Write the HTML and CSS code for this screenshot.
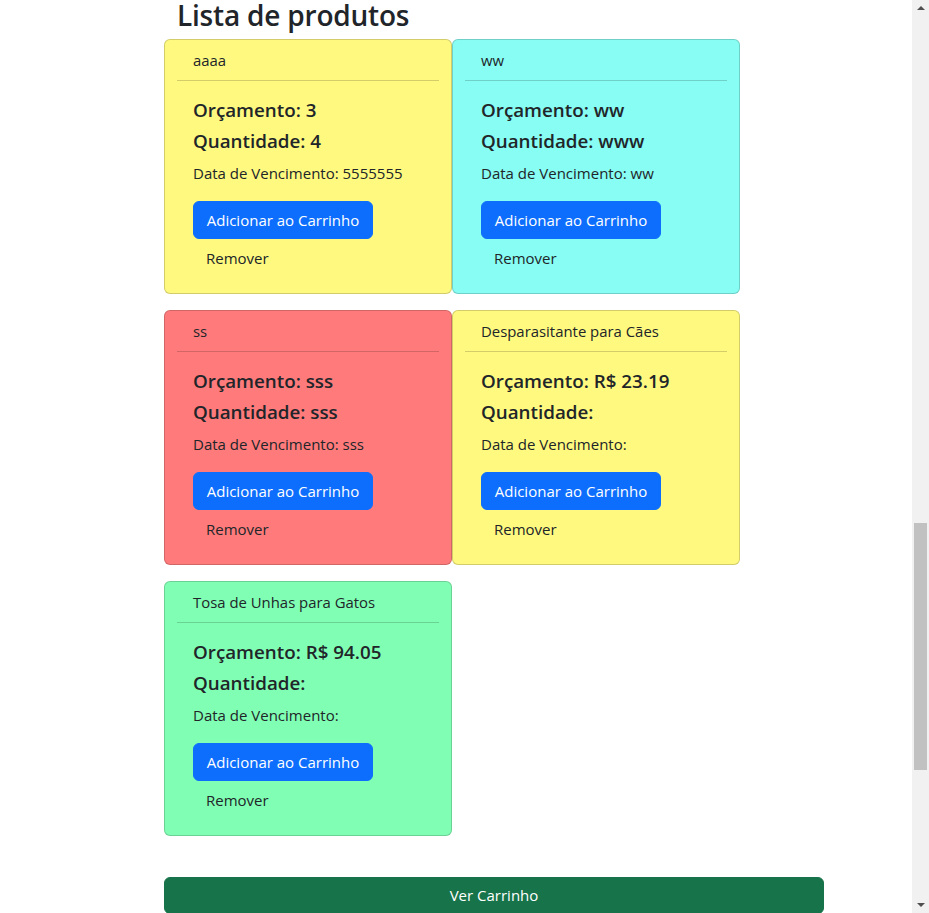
FILE: index.html
```html
<!DOCTYPE html>
<html lang="pt-BR">
<head>
<meta charset="utf-8">
<title>Lista de produtos</title>
<link rel="stylesheet" href="styles.css">
</head>
<body>
<div class="page">
  <main class="main">
    <h3 class="title">Lista de produtos</h3>
    <div class="grid">
      <div class="card yellow">
        <div class="card-header">aaaa</div>
        <div class="card-body">
          <h5 class="card-title">Orçamento: 3</h5>
          <h5 class="card-title">Quantidade: 4</h5>
          <p class="card-text">Data de Vencimento: 5555555</p>
          <button class="btn btn-primary">Adicionar ao Carrinho</button>
          <button class="btn btn-plain">Remover</button>
        </div>
      </div>
      <div class="card cyan">
        <div class="card-header">ww</div>
        <div class="card-body">
          <h5 class="card-title">Orçamento: ww</h5>
          <h5 class="card-title">Quantidade: www</h5>
          <p class="card-text">Data de Vencimento: ww</p>
          <button class="btn btn-primary">Adicionar ao Carrinho</button>
          <button class="btn btn-plain">Remover</button>
        </div>
      </div>
      <div class="card red">
        <div class="card-header">ss</div>
        <div class="card-body">
          <h5 class="card-title">Orçamento: sss</h5>
          <h5 class="card-title">Quantidade: sss</h5>
          <p class="card-text">Data de Vencimento: sss</p>
          <button class="btn btn-primary">Adicionar ao Carrinho</button>
          <button class="btn btn-plain">Remover</button>
        </div>
      </div>
      <div class="card yellow">
        <div class="card-header">Desparasitante para Cães</div>
        <div class="card-body">
          <h5 class="card-title">Orçamento: R$ 23.19</h5>
          <h5 class="card-title">Quantidade:</h5>
          <p class="card-text">Data de Vencimento:</p>
          <button class="btn btn-primary">Adicionar ao Carrinho</button>
          <button class="btn btn-plain">Remover</button>
        </div>
      </div>
      <div class="card green">
        <div class="card-header">Tosa de Unhas para Gatos</div>
        <div class="card-body">
          <h5 class="card-title">Orçamento: R$ 94.05</h5>
          <h5 class="card-title">Quantidade:</h5>
          <p class="card-text">Data de Vencimento:</p>
          <button class="btn btn-primary">Adicionar ao Carrinho</button>
          <button class="btn btn-plain">Remover</button>
        </div>
      </div>
    </div>
    <button class="btn btn-success">Ver Carrinho</button>
  </main>
  <aside class="scrollbar">
    <span class="arrow arrow-up"></span>
    <div class="track"><div class="thumb"></div></div>
    <span class="arrow arrow-down"></span>
  </aside>
</div>
</body>
</html>
```

FILE: styles.css
```css
html, body {
  margin: 0;
  padding: 0;
  height: 913px;
  overflow: hidden;
  background: #fff;
}
body {
  font-family: "Open Sans", "Noto Sans", sans-serif;
  color: #212529;
  font-size: 15px;
}
.page {
  display: flex;
  height: 913px;
}
.main {
  flex: 1;
  padding-left: 164px;
  display: flex;
  flex-direction: column;
  align-items: flex-start;
}
.title {
  margin: 0 0 9px 13px;
  font-size: 28px;
  font-weight: 600;
  line-height: 30px;
  letter-spacing: -0.2px;
}
.grid {
  display: grid;
  grid-template-columns: 288px 288px;
  row-gap: 16px;
}
.card {
  border: 1px solid rgba(0, 0, 0, 0.175);
  border-radius: 6px;
  padding: 0 12px;
}
.yellow { background: #fff97f; }
.cyan { background: #87fdf3; }
.red { background: #ff7b7b; }
.green { background: #80ffb4; }
.card-header {
  padding: 8px 16px;
  line-height: 24px;
  font-size: 14.9px;
  border-bottom: 1px solid rgba(0, 0, 0, 0.175);
}
.card-body {
  padding: 16px;
  display: flex;
  flex-direction: column;
  align-items: flex-start;
}
.card-title {
  margin: 0 0 8px;
  font-size: 18.8px;
  font-weight: 600;
  line-height: 24px;
}
.card-title:first-child {
  margin-top: 1px;
  margin-bottom: 7px;
}
.card-text {
  margin: 0 0 16px;
  font-size: 15px;
  line-height: 24px;
}
.btn {
  font-family: inherit;
  font-size: 15px;
  line-height: 24px;
  padding: 6px 12px;
  border: 1px solid transparent;
  border-radius: 6px;
  background: transparent;
  color: #212529;
  cursor: pointer;
}
.btn-primary {
  background: #0d6efd;
  border-color: #0d6efd;
  color: #fff;
  width: 180px;
}
.btn-plain {
  color: #212529;
}
.btn-success {
  margin-top: 41px;
  width: 660px;
  background: #177349;
  border-color: #177349;
  color: #fff;
  padding-top: 5px;
}
.scrollbar {
  width: 17px;
  background: #f1f1f1;
  display: flex;
  flex-direction: column;
  align-items: center;
}
.track {
  flex: 1;
  width: 13px;
  display: flex;
  flex-direction: column;
}
.thumb {
  margin-top: 508px;
  height: 247px;
  background: #c1c1c1;
}
.arrow {
  width: 0;
  height: 0;
  border-left: 4px solid transparent;
  border-right: 4px solid transparent;
}
.arrow-up {
  margin: 6px 0 5px;
  border-bottom: 4px solid #505050;
}
.arrow-down {
  margin: 5px 0 6px;
  border-top: 4px solid #505050;
}
```
